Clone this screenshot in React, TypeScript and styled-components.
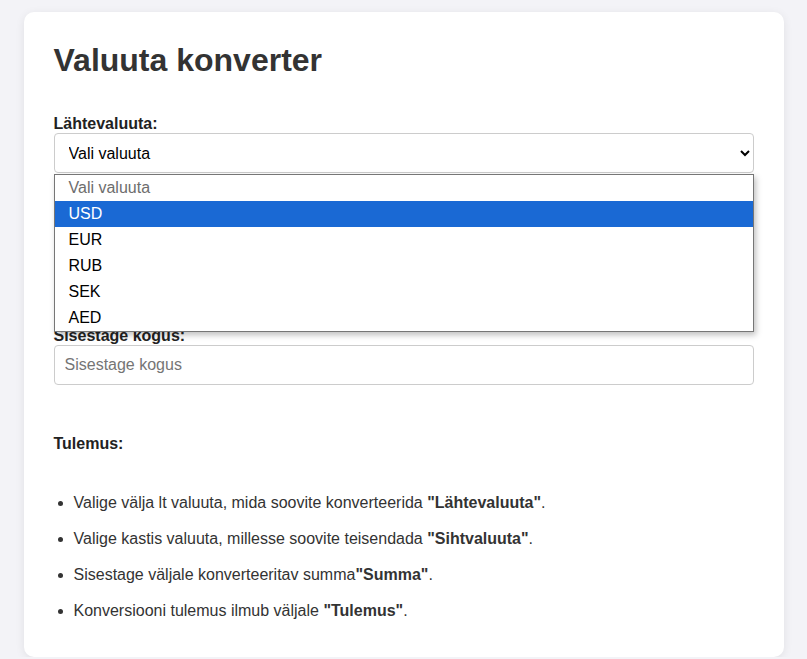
import React from "react";
import styled, { createGlobalStyle } from "styled-components";

const GlobalStyle = createGlobalStyle`
  body {
    margin: 0;
    padding: 12px 0 0;
    background: #f3f3f7;
    font-family: "Liberation Sans", Arial, sans-serif;
    line-height: 1.15;
    color: #333;
  }
`;

const Card = styled.main`
  width: 760px;
  margin: 0 auto;
  padding: 30px;
  box-sizing: border-box;
  background: #fff;
  border-radius: 10px;
  box-shadow: 0 2px 10px rgba(0, 0, 0, 0.08);
`;

const Title = styled.h1`
  margin: 0 0 36px;
  font-size: 32px;
  line-height: 1.15;
  font-weight: bold;
  color: #333;
`;

const Field = styled.div<{ $space: number }>`
  position: relative;
  margin-bottom: ${(p) => p.$space}px;
`;

const Label = styled.label`
  display: block;
  font-size: 16px;
  font-weight: bold;
  color: #222;
`;

const Select = styled.select`
  display: block;
  width: 100%;
  height: 40px;
  padding: 0 10px;
  box-sizing: border-box;
  font-family: "Liberation Sans", Arial, sans-serif;
  font-size: 16px;
  color: #000;
  background: #fff;
  border: 1px solid #ccc;
  border-radius: 4px;
`;

const Input = styled.input`
  display: block;
  width: 100%;
  height: 40px;
  padding: 0 10px;
  box-sizing: border-box;
  font-family: "Liberation Sans", Arial, sans-serif;
  font-size: 16px;
  border: 1px solid #ccc;
  border-radius: 4px;
  &::placeholder {
    color: #757575;
  }
`;

const Popup = styled.ul`
  position: absolute;
  left: 0;
  right: 0;
  top: calc(100% + 1px);
  z-index: 10;
  margin: 0;
  padding: 0;
  list-style: none;
  background: #fff;
  border: 1px solid #767676;
  box-shadow: 2px 3px 6px rgba(0, 0, 0, 0.25);
`;

const PopupOption = styled.li<{ $active?: boolean; $muted?: boolean }>`
  height: 26px;
  line-height: 26px;
  padding-left: 14px;
  font-size: 16px;
  background: ${(p) => (p.$active ? "#1a69d4" : "#fff")};
  color: ${(p) => (p.$active ? "#fff" : p.$muted ? "#6d6d6d" : "#000")};
`;

const ResultLabel = styled.div`
  font-size: 16px;
  font-weight: bold;
  color: #222;
`;

const Steps = styled.ul`
  margin: 40.8px 0 7px;
  padding-left: 20px;
  font-size: 16px;
  color: #333;
  li + li {
    margin-top: 17.7px;
  }
  b {
    color: #333;
  }
`;

const currencies = ["USD", "EUR", "RUB", "SEK", "AED"];

export default function App() {
  return (
    <>
      <GlobalStyle />
      <Card>
        <Title>Valuuta konverter</Title>

        <Field $space={153.4}>
          <Label>Lähtevaluuta:</Label>
          <Select defaultValue="">
            <option value="">Vali valuuta</option>
            {currencies.map((c) => (
              <option key={c}>{c}</option>
            ))}
          </Select>
          <Popup>
            <PopupOption $muted>Vali valuuta</PopupOption>
            {currencies.map((c, i) => (
              <PopupOption key={c} $active={i === 0}>
                {c}
              </PopupOption>
            ))}
          </Popup>
        </Field>

        <Field $space={49.6}>
          <Label>Sisestage kogus:</Label>
          <Input type="number" placeholder="Sisestage kogus" />
        </Field>

        <ResultLabel>Tulemus:</ResultLabel>

        <Steps>
          <li>
            Valige välja lt valuuta, mida soovite konverteerida <b>"Lähtevaluuta"</b>.
          </li>
          <li>
            Valige kastis valuuta, millesse soovite teisendada <b>"Sihtvaluuta"</b>.
          </li>
          <li>
            Sisestage väljale konverteeritav summa<b>"Summa"</b>.
          </li>
          <li>
            Konversiooni tulemus ilmub väljale <b>"Tulemus"</b>.
          </li>
        </Steps>
      </Card>
    </>
  );
}
